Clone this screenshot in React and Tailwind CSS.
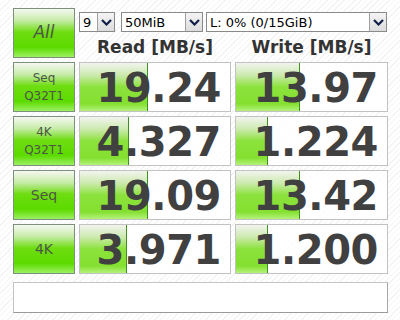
import React from 'react';

const rows = [
  { label: ['Seq', 'Q32T1'], read: '19.24', write: '13.97', readBar: 68, writeBar: 64 },
  { label: ['4K', 'Q32T1'], read: '4.327', write: '1.224', readBar: 49, writeBar: 32 },
  { label: ['Seq'], read: '19.09', write: '13.42', readBar: 68, writeBar: 64 },
  { label: ['4K'], read: '3.971', write: '1.200', readBar: 47, writeBar: 32 },
];

const Chevron = () => (
  <svg width="11" height="7" viewBox="0 0 11 7">
    <path d="M1 1l4.5 4.5L10 1" fill="none" stroke="#10204a" strokeWidth="2.2" />
  </svg>
);

const Select = ({ value, width }) => (
  <div className={`flex items-center h-[20px] bg-white border border-[#8a8a8a] ${width}`}>
    <span className="flex-1 pl-[3px] text-[13px] leading-none text-black">{value}</span>
    <span className="w-[17px] h-[18px] flex items-center justify-center bg-gradient-to-b from-[#f4f4f4] to-[#dcdcdc] border-l border-[#a0a0a0]">
      <Chevron />
    </span>
  </div>
);

const GreenButton = ({ children, className = '' }) => (
  <div
    className={`w-[62px] h-[50px] border border-[#7d907d] flex flex-col items-center justify-center text-[#4d5646] bg-[linear-gradient(to_bottom,#f6f8f2_0%,#c6eca8_24%,#6edd10_48%,#5cdb00_80%,#9cf062_100%)] ${className}`}
  >
    {children}
  </div>
);

const ValueCell = ({ value, bar, width }) => (
  <div className={`relative h-[50px] ${width} border border-[#c2c2c2] bg-white/80 overflow-hidden`}>
    <div
      className="absolute left-0 top-0 bottom-0 border-r border-[#3f8f22] bg-[linear-gradient(to_bottom,#f2f4ee_0%,#cdeab0_25%,#8ce23c_50%,#84e030_85%,#b4f27c_100%)]"
      style={{ width: bar }}
    />
    <div className="relative h-full flex items-center justify-end pr-[9px] pt-[2px] text-[40px] font-bold tracking-[-0.4px] text-[#404040] leading-none">
      {value}
    </div>
  </div>
);

export default function App() {
  return (
    <div
      className="w-[400px] h-[320px] pl-[13px] pt-[8px] bg-[repeating-linear-gradient(135deg,#ffffff_0px,#ffffff_3px,#f3f3f3_3px,#f3f3f3_4px)]"
      style={{ fontFamily: '"DejaVu Sans", Verdana, sans-serif' }}
    >
      <div className="flex gap-[4px]">
        <GreenButton>
          <span className="text-[17px] italic">All</span>
        </GreenButton>
        <div className="flex flex-col">
          <div className="flex items-center mt-[4px]">
            <Select value="9" width="w-[36px]" />
            <div className="ml-[6px]">
              <Select value="50MiB" width="w-[82px]" />
            </div>
            <div className="ml-[3px]">
              <Select value="L: 0% (0/15GiB)" width="w-[181px]" />
            </div>
          </div>
          <div className="flex gap-[4px] mt-[5px]">
            <div className="w-[152px] text-center text-[17px] font-bold text-[#333] leading-[20px]">Read [MB/s]</div>
            <div className="w-[153px] text-center text-[17px] font-bold text-[#333] leading-[20px]">Write [MB/s]</div>
          </div>
        </div>
      </div>

      <div className="flex flex-col gap-[4px] mt-[4px]">
        {rows.map((r) => (
          <div key={r.label.join('-') + r.read} className="flex gap-[4px]">
            <GreenButton className="gap-[2px]">
              {r.label.length > 1 ? (
                r.label.map((l) => (
                  <span key={l} className="text-[12px] leading-[16px]">{l}</span>
                ))
              ) : (
                <span className="text-[14px] leading-[18px]">{r.label[0]}</span>
              )}
            </GreenButton>
            <ValueCell value={r.read} bar={r.readBar} width="w-[152px]" />
            <ValueCell value={r.write} bar={r.writeBar} width="w-[153px]" />
          </div>
        ))}
      </div>

      <div className="mt-[8px] w-[375px] h-[31px] bg-white border border-[#c4c4c4] border-b-[#9a9a9a] border-r-[#a8a8a8]" />
    </div>
  );
}
